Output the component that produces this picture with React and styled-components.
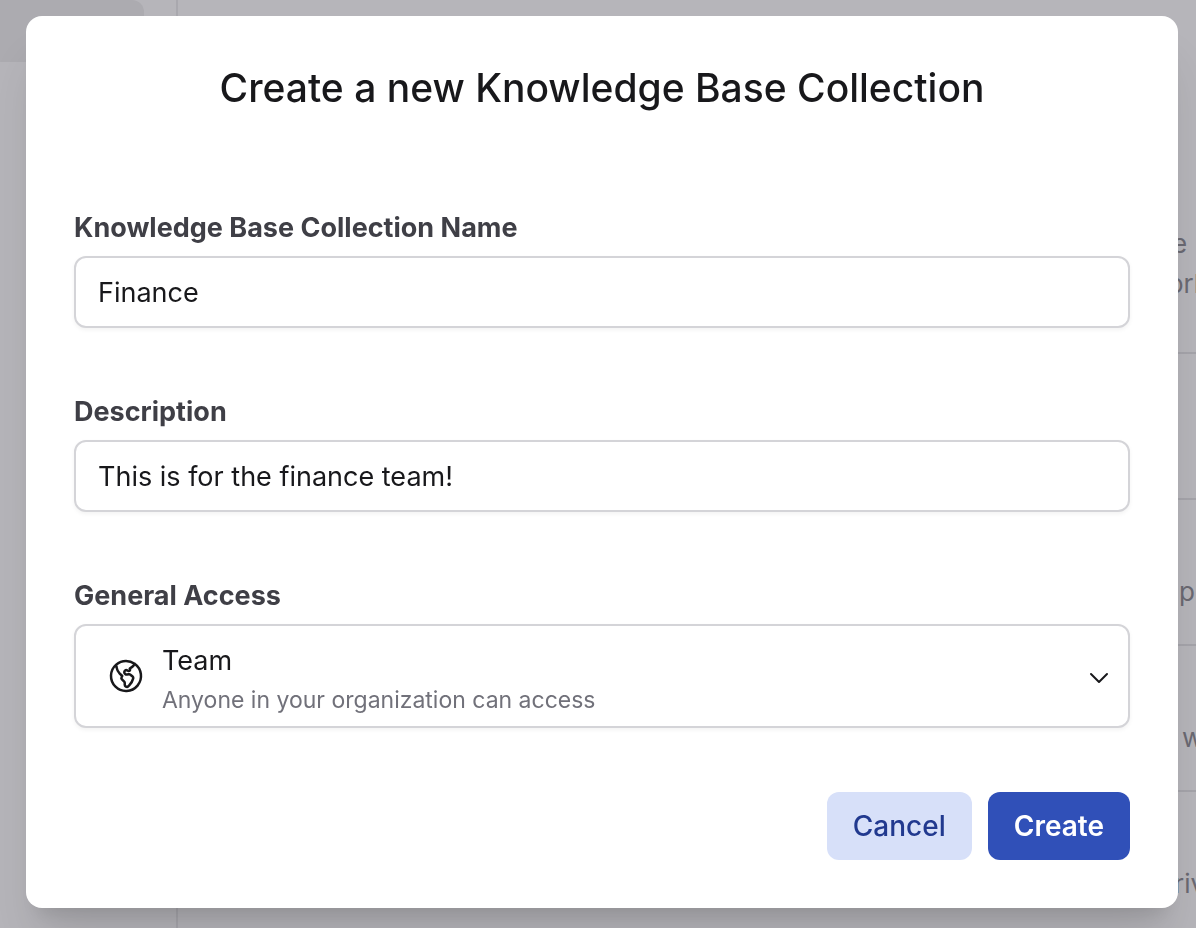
import React, { useState } from "react";
import styled, { createGlobalStyle } from "styled-components";

const GlobalStyle = createGlobalStyle`
  *, *::before, *::after { box-sizing: border-box; }
  html, body { margin: 0; height: 100%; }
  body {
    overflow: hidden;
    background: #b6b5ba;
    color: #18181b;
    font-family: Inter, "Liberation Sans", sans-serif;
  }
  button, input, select { font: inherit; color: inherit; margin: 0; }
`;

const Page = styled.div`
  display: flex;
  min-height: 100vh;
`;

const Sidebar = styled.aside`
  flex: 0 0 178px;
  padding-right: 32px;
  border-right: 2px solid #a9a8ae;
`;

const SidebarItem = styled.div`
  height: 62px;
  border-top-right-radius: 12px;
  background: #acabb0;
`;

const Content = styled.main`
  flex: 1;
  display: flex;
  flex-direction: column;
  align-items: stretch;
  padding-top: 208px;
`;

const ListRow = styled.div`
  display: flex;
  justify-content: flex-end;
  align-items: ${(p) => (p.$top ? "flex-start" : "center")};
  height: 146px;
  padding-top: ${(p) => (p.$top ? "16px" : "0")};
  border-bottom: 2px solid #a5a4aa;
`;

const ListText = styled.div`
  width: 28px;
  overflow: hidden;
`;

const ListLine = styled.p`
  height: 40px;
  margin: 0;
  padding-left: ${(p) => p.$indent}px;
  white-space: nowrap;
  color: #6a6972;
  font-size: 26px;
  line-height: 40px;
`;

const Overlay = styled.div`
  position: fixed;
  inset: 0;
  padding: 16px 18px 20px 26px;
`;

const Dialog = styled.form`
  display: flex;
  flex-direction: column;
  padding: 48px;
  border-radius: 16px;
  background: #fff;
  box-shadow: 0 40px 50px -10px rgba(0, 0, 0, 0.12), 0 16px 20px -12px rgba(0, 0, 0, 0.12);
`;

const Title = styled.h1`
  margin: 0 0 96px;
  font-size: 39px;
  font-weight: 500;
  line-height: 48px;
  text-align: center;
`;

const Field = styled.div`
  display: flex;
  flex-direction: column;
  gap: 8px;
  margin-bottom: 64px;
`;

const Label = styled.label`
  color: #3f3f46;
  font-size: 27px;
  font-weight: 700;
  line-height: 40px;
`;

const TextInput = styled.input`
  width: 100%;
  height: 72px;
  padding: 0 22px;
  border: 2px solid #d4d4d8;
  border-radius: 12px;
  outline: none;
  background: #fff;
  box-shadow: 0 2px 4px rgba(0, 0, 0, 0.05);
  font-size: 27px;
`;

const SelectBox = styled.div`
  display: grid;
  grid-template-columns: 32px 40px 16px 1fr 32px 15px;
  grid-template-rows: 56px 48px;
`;

const Select = styled.select`
  grid-area: 1 / 1 / -1 / -1;
  width: 100%;
  padding: 14px 72px 46px 86px;
  border: 2px solid #d4d4d8;
  border-radius: 12px;
  outline: none;
  appearance: none;
  background: #fff;
  box-shadow: 0 2px 4px rgba(0, 0, 0, 0.05);
  font-size: 27px;
`;

const SelectIcon = styled.svg`
  grid-row: 1 / -1;
  grid-column: ${(p) => p.$column};
  align-self: center;
  fill: none;
  stroke: #18181b;
  stroke-width: 1.5;
  stroke-linecap: round;
  stroke-linejoin: round;
  pointer-events: none;
`;

const SelectHint = styled.span`
  grid-area: 2 / 4;
  color: #71717a;
  font-size: 23px;
  line-height: 40px;
  pointer-events: none;
`;

const Actions = styled.div`
  display: flex;
  justify-content: flex-end;
  gap: 16px;
`;

const Button = styled.button`
  height: 68px;
  padding: 0 26px;
  border: 0;
  border-radius: 12px;
  background: ${(p) => (p.$primary ? "#3050b8" : "#d7e0f9")};
  color: ${(p) => (p.$primary ? "#fff" : "#21398f")};
  font-size: 28px;
  font-weight: ${(p) => (p.$primary ? 600 : 500)};
`;

const rows = [
  { top: true, lines: [{ indent: 4, text: "e" }, { indent: 0, text: "ork" }] },
  { lines: [] },
  { lines: [{}, { indent: 11, text: "p" }] },
  { lines: [{}, { indent: 14, text: "w" }] },
  { lines: [{}, { indent: 6, text: "riv" }] },
];

export default function App() {
  const [name, setName] = useState("Finance");
  const [description, setDescription] = useState("This is for the finance team!");

  return (
    <>
      <GlobalStyle />
      <Page>
        <Sidebar>
          <SidebarItem />
        </Sidebar>
        <Content>
          {rows.map((row, i) => (
            <ListRow key={i} $top={row.top}>
              <ListText>
                {row.lines.map((line, j) => (
                  <ListLine key={j} $indent={line.indent || 0}>
                    {line.text}
                  </ListLine>
                ))}
              </ListText>
            </ListRow>
          ))}
        </Content>
      </Page>
      <Overlay>
        <Dialog role="dialog" aria-labelledby="dialog-title" onSubmit={(e) => e.preventDefault()}>
          <Title id="dialog-title">Create a new Knowledge Base Collection</Title>
          <Field>
            <Label htmlFor="name">Knowledge Base Collection Name</Label>
            <TextInput id="name" value={name} onChange={(e) => setName(e.target.value)} />
          </Field>
          <Field>
            <Label htmlFor="description">Description</Label>
            <TextInput
              id="description"
              value={description}
              onChange={(e) => setDescription(e.target.value)}
            />
          </Field>
          <Field>
            <Label htmlFor="access">General Access</Label>
            <SelectBox>
              <Select id="access" defaultValue="team" aria-describedby="access-hint">
                <option value="team">Team</option>
              </Select>
              <SelectIcon $column={2} width="40" height="40" viewBox="0 0 24 24" aria-hidden="true">
                <path d="m6.115 5.19.319 1.913A6 6 0 0 0 8.11 10.36L9.75 12l-.387.775c-.217.433-.132.956.21 1.298l1.348 1.348c.21.21.329.497.329.795v1.089c0 .426.24.815.622 1.006l.153.076c.433.217.956.132 1.298-.21l.723-.723a8.7 8.7 0 0 0 2.288-4.042 1.087 1.087 0 0 0-.358-1.099l-1.33-1.108c-.251-.21-.582-.299-.905-.245l-1.17.195a1.125 1.125 0 0 1-.98-.314l-.295-.295a1.125 1.125 0 0 1 0-1.591l.13-.132a1.125 1.125 0 0 1 1.3-.21l.603.302a.809.809 0 0 0 1.086-1.086L14.25 7.5l1.256-.837a4.5 4.5 0 0 0 1.528-1.732l.146-.292M6.115 5.19A9 9 0 1 0 17.18 4.64M6.115 5.19A8.965 8.965 0 0 1 12 3c1.929 0 3.716.607 5.18 1.64" />
              </SelectIcon>
              <SelectHint id="access-hint">Anyone in your organization can access</SelectHint>
              <SelectIcon $column={5} width="32" height="32" viewBox="0 0 24 24" aria-hidden="true">
                <path d="M6 10.5l6 6 6-6" />
              </SelectIcon>
            </SelectBox>
          </Field>
          <Actions>
            <Button type="button">Cancel</Button>
            <Button type="submit" $primary>
              Create
            </Button>
          </Actions>
        </Dialog>
      </Overlay>
    </>
  );
}
